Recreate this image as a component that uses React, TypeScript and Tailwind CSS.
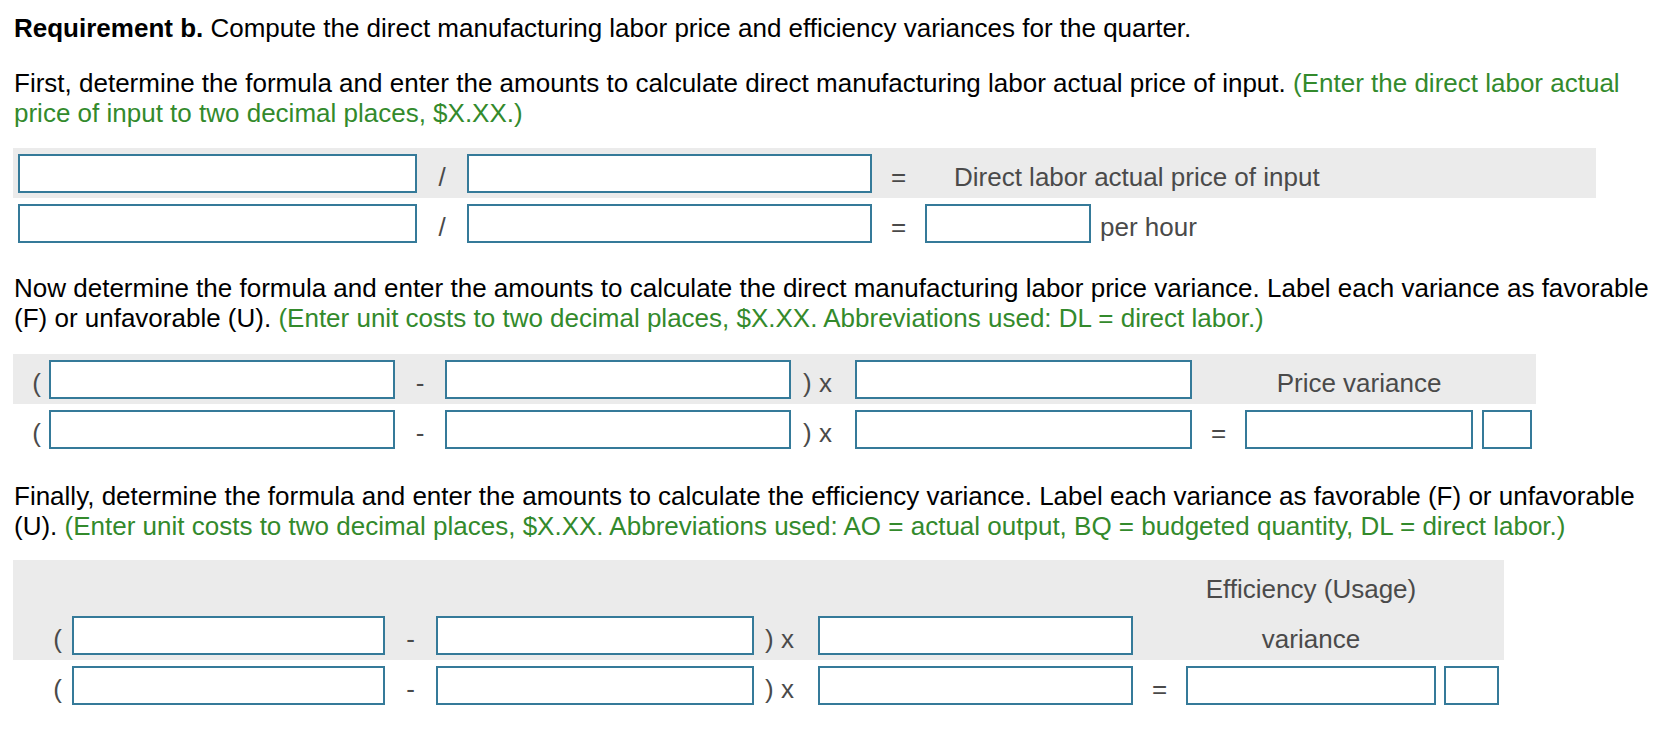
import React from "react";

const box = "block h-[39px] border-2 border-[#357a99] bg-white outline-none";
const sym = "text-[#4a4a4a] pt-[8px]";

function Box({ w }: { w: string }) {
  return <input type="text" className={`${box} ${w}`} />;
}

export default function App() {
  return (
    <div className="min-h-screen bg-white font-['Liberation_Sans',Arial,sans-serif] text-[26px] leading-[30px] text-black pt-[13px]">
      <p className="pl-[14px]">
        <span className="font-bold">Requirement b.</span> Compute the direct manufacturing labor price and efficiency
        variances for the quarter.
      </p>

      <p className="pl-[14px] mt-[25px] whitespace-nowrap">
        First, determine the formula and enter the amounts to calculate direct manufacturing labor actual price of input.{" "}
        <span className="text-[#338a2c]">(Enter the direct labor actual</span>
        <br />
        <span className="text-[#338a2c]">price of input to two decimal places, $X.XX.)</span>
      </p>

      {/* actual price of input */}
      <div className="mt-[20px] ml-[13px] w-[1583px]">
        <div className="flex items-center h-[50px] bg-[#ebebeb] pl-[5px]">
          <Box w="w-[399px]" />
          <span className={`w-[50px] text-center ${sym}`}>/</span>
          <Box w="w-[405px]" />
          <span className={`w-[53px] text-center ${sym}`}>=</span>
          <span className={`pl-[29px] ${sym}`}>Direct labor actual price of input</span>
        </div>
        <div className="flex items-center h-[50px] pl-[5px]">
          <Box w="w-[399px]" />
          <span className={`w-[50px] text-center ${sym}`}>/</span>
          <Box w="w-[405px]" />
          <span className={`w-[53px] text-center ${sym}`}>=</span>
          <Box w="w-[166px]" />
          <span className={`pl-[9px] ${sym}`}>per hour</span>
        </div>
      </div>

      <p className="pl-[14px] mt-[25px] whitespace-nowrap">
        Now determine the formula and enter the amounts to calculate the direct manufacturing labor price variance. Label
        each variance as favorable
        <br />
        (F) or unfavorable (U).{" "}
        <span className="text-[#338a2c]">
          (Enter unit costs to two decimal places, $X.XX. Abbreviations used: DL = direct labor.)
        </span>
      </p>

      {/* price variance */}
      <div className="mt-[21px] ml-[13px] w-[1523px]">
        <div className="flex items-center h-[50px] bg-[#ebebeb]">
          <span className={`w-[36px] text-right pr-[8px] ${sym}`}>(</span>
          <Box w="w-[346px]" />
          <span className={`w-[50px] text-center ${sym}`}>-</span>
          <Box w="w-[346px]" />
          <span className={`w-[64px] pl-[12px] ${sym}`}>) x</span>
          <Box w="w-[337px]" />
          <span className="w-[53px]" />
          <span className={`w-[228px] text-center ${sym}`}>Price variance</span>
        </div>
        <div className="flex items-center h-[50px]">
          <span className={`w-[36px] text-right pr-[8px] ${sym}`}>(</span>
          <Box w="w-[346px]" />
          <span className={`w-[50px] text-center ${sym}`}>-</span>
          <Box w="w-[346px]" />
          <span className={`w-[64px] pl-[12px] ${sym}`}>) x</span>
          <Box w="w-[337px]" />
          <span className={`w-[53px] text-center ${sym}`}>=</span>
          <Box w="w-[228px]" />
          <Box w="w-[50px] ml-[9px]" />
        </div>
      </div>

      <p className="pl-[14px] mt-[27px] whitespace-nowrap">
        Finally, determine the formula and enter the amounts to calculate the efficiency variance. Label each variance as
        favorable (F) or unfavorable
        <br />
        (U).{" "}
        <span className="text-[#338a2c]">
          (Enter unit costs to two decimal places, $X.XX. Abbreviations used: AO = actual output, BQ = budgeted quantity,
          DL = direct labor.)
        </span>
      </p>

      {/* efficiency variance */}
      <div className="mt-[19px] ml-[13px] w-[1491px]">
        <div className="bg-[#ebebeb]">
          <div className="flex items-center h-[50px]">
            <span className="w-[1173px]" />
            <span className={`w-[250px] text-center ${sym}`}>Efficiency (Usage)</span>
          </div>
          <div className="flex items-center h-[50px]">
            <span className={`w-[59px] text-right pr-[10px] ${sym}`}>(</span>
            <Box w="w-[313px]" />
            <span className={`w-[51px] text-center ${sym}`}>-</span>
            <Box w="w-[318px]" />
            <span className={`w-[64px] pl-[11px] ${sym}`}>) x</span>
            <Box w="w-[315px]" />
            <span className="w-[53px]" />
            <span className={`w-[250px] text-center ${sym}`}>variance</span>
          </div>
        </div>
        <div className="flex items-center h-[50px]">
          <span className={`w-[59px] text-right pr-[10px] ${sym}`}>(</span>
          <Box w="w-[313px]" />
          <span className={`w-[51px] text-center ${sym}`}>-</span>
          <Box w="w-[318px]" />
          <span className={`w-[64px] pl-[11px] ${sym}`}>) x</span>
          <Box w="w-[315px]" />
          <span className={`w-[53px] text-center ${sym}`}>=</span>
          <Box w="w-[250px]" />
          <Box w="w-[55px] ml-[8px]" />
        </div>
      </div>
    </div>
  );
}
